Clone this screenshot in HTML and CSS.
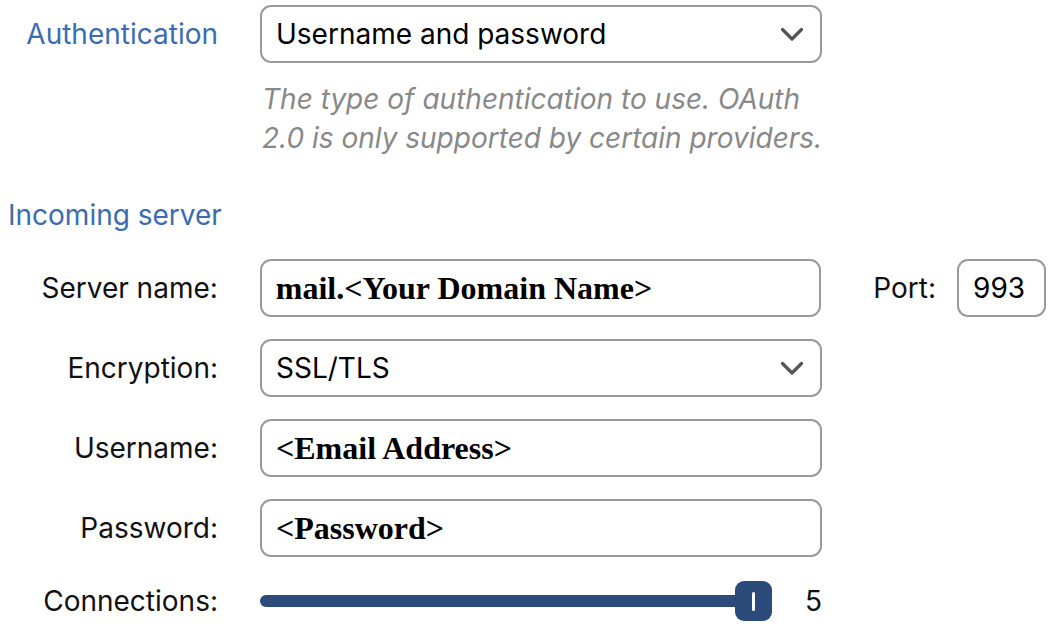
FILE: index.html
```html
<!DOCTYPE html>
<html lang="en">

<head>
  <meta charset="UTF-8">
  <meta name="viewport" content="width=device-width, initial-scale=1.0">
  <title>Account settings</title>
  <link rel="stylesheet" href="styles.css">
</head>

<body>
  <section class="settings">
    <div class="row row-top">
      <label class="row-label accent">Authentication</label>
      <div class="field select">
        <span>Username and password</span>
        <svg class="chevron" viewBox="0 0 24 15" width="24" height="15">
          <path d="M2.5 2.5 L12 12 L21.5 2.5" fill="none" stroke="#555" stroke-width="3.2" stroke-linecap="round" stroke-linejoin="round" />
        </svg>
      </div>
    </div>
    <p class="help">The type of authentication to use. OAuth<br>2.0 is only supported by certain providers.</p>

    <h2 class="section-title accent">Incoming server</h2>

    <div class="row">
      <label class="row-label">Server name:</label>
      <div class="field serif">mail.&lt;Your Domain Name&gt;</div>
      <label class="port-label">Port:</label>
      <div class="field port">993</div>
    </div>

    <div class="row">
      <label class="row-label">Encryption:</label>
      <div class="field select">
        <span>SSL/TLS</span>
        <svg class="chevron" viewBox="0 0 24 15" width="24" height="15">
          <path d="M2.5 2.5 L12 12 L21.5 2.5" fill="none" stroke="#555" stroke-width="3.2" stroke-linecap="round" stroke-linejoin="round" />
        </svg>
      </div>
    </div>

    <div class="row">
      <label class="row-label">Username:</label>
      <div class="field serif">&lt;Email Address&gt;</div>
    </div>

    <div class="row">
      <label class="row-label">Password:</label>
      <div class="field serif">&lt;Password&gt;</div>
    </div>

    <div class="row row-slider">
      <label class="row-label">Connections:</label>
      <div class="slider-wrap">
        <div class="slider">
          <div class="slider-track"></div>
          <div class="slider-thumb"></div>
        </div>
        <span class="slider-value">5</span>
      </div>
    </div>
  </section>
</body>

</html>
```

FILE: styles.css
```css
html {
  box-sizing: border-box;
  font-family: Inter, "Noto Sans", sans-serif;
  font-size: 28px;
}

*,
*::before,
*::after {
  box-sizing: border-box;
}

body {
  margin: 0;
  padding: 5px 8px;
  color: #111;
  background: #fff;
}

.accent {
  color: #3b6cb2;
}

.row {
  display: flex;
  align-items: center;
  height: 58px;
  margin-bottom: 22px;
}

.row-top {
  margin-bottom: 0;
}

.row-label {
  width: 210px;
  margin-right: 42px;
  text-align: right;
  white-space: nowrap;
}

.field {
  display: flex;
  align-items: center;
  width: 562px;
  height: 58px;
  padding: 0 16px 0 14px;
  border: 2px solid #9a9a9a;
  border-radius: 11px;
  background: #fff;
  color: #000;
  white-space: nowrap;
}

.select {
  justify-content: space-between;
}

.serif {
  font-family: "Liberation Serif", "Times New Roman", serif;
  font-weight: bold;
  font-size: 32px;
}

.port-label {
  margin-left: 52px;
  margin-right: 21px;
}

.field.port {
  width: 89px;
  padding-left: 14px;
}

.help {
  margin: 17px 0 0 254px;
  font-style: italic;
  line-height: 39px;
  color: #888;
}

.section-title {
  margin: 37px 0 24px;
  font-size: 28px;
  font-weight: normal;
  line-height: 40px;
}

.row-slider {
  height: 40px;
  margin-top: 24px;
}

.slider-wrap {
  display: flex;
  align-items: center;
  width: 562px;
}

.slider {
  position: relative;
  width: 514px;
  height: 40px;
  display: flex;
  align-items: center;
}

.slider-track {
  width: 100%;
  height: 12px;
  border-radius: 6px;
  background: #2c4a7a;
}

.slider-thumb {
  position: absolute;
  right: 0;
  top: 0;
  width: 37px;
  height: 40px;
  border-radius: 9px;
  background: #2c4a7a;
}

.slider-thumb::after {
  content: "";
  position: absolute;
  left: 17px;
  top: 11px;
  width: 3px;
  height: 19px;
  border-radius: 2px;
  background: #fff;
}

.slider-value {
  margin-left: 33px;
}
```
